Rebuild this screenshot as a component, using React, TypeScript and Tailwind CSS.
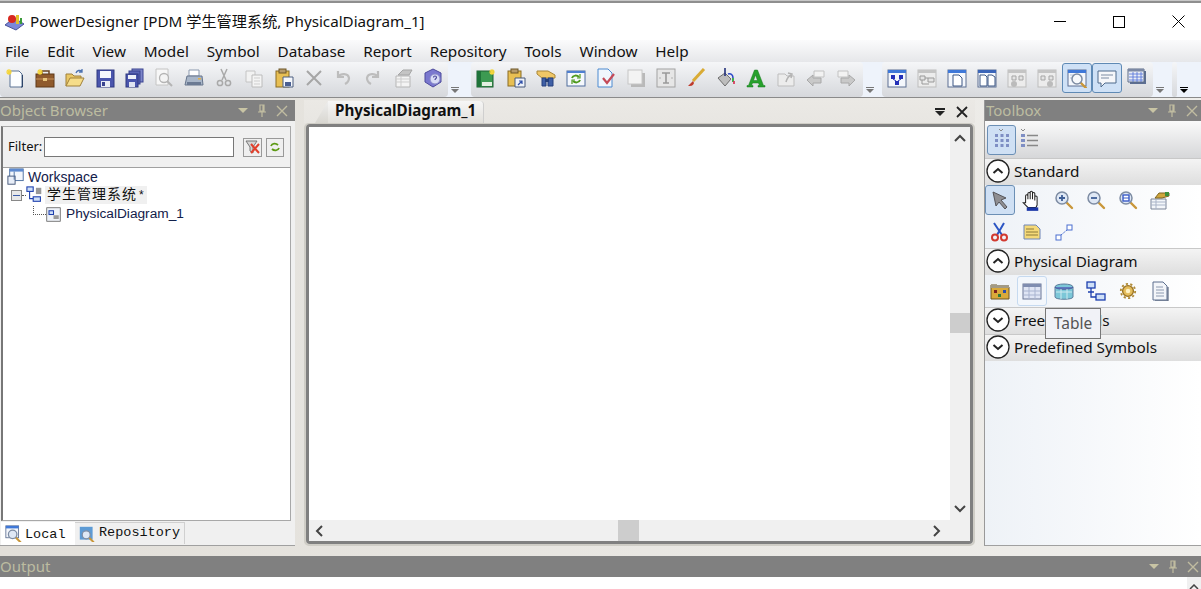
import React from 'react';

const sans = 'font-["Noto_Sans","Noto_Sans_CJK_SC",sans-serif]';

const Svg = ({ children, size = 20 }: { children: React.ReactNode; size?: number }) => (
  <svg width={size} height={size} viewBox="0 0 20 20" fill="none">{children}</svg>
);

const Star = ({ x = 3, y = 3 }: { x?: number; y?: number }) => (
  <path d={`M${x} ${y - 3}v6M${x - 3} ${y}h6M${x - 2} ${y - 2}l4 4M${x + 2} ${y - 2}l-4 4`} stroke="#f5d53a" strokeWidth="1.2" />
);

const Mag = ({ x = 9, y = 9, r = 5, fill = '#eef3fa' }: { x?: number; y?: number; r?: number; fill?: string }) => (
  <g>
    <path d={`M${x + r - 1} ${y + r - 1}l5 5`} stroke="#c9973a" strokeWidth="2.4" strokeLinecap="round" />
    <circle cx={x} cy={y} r={r} fill={fill} stroke="#7d8ca3" strokeWidth="1.5" />
  </g>
);

const Win = ({ x = 1, y = 2, w = 18, h = 16, bar = '#3f78d8' }: { x?: number; y?: number; w?: number; h?: number; bar?: string }) => (
  <g>
    <rect x={x} y={y} width={w} height={h} fill="#f4f7fc" stroke="#5c6f92" />
    <rect x={x} y={y} width={w} height="3" fill={bar} />
  </g>
);

// main toolbar, first group
const toolbarA: React.ReactNode[] = [
  <Svg key="new"><path d="M5 3h9l3 3v13H5z" fill="#fbfdff" stroke="#5a7394" /><path d="M16 19h1.5V7" stroke="#2d4468" /><Star x={4} y={4} /></Svg>,
  <Svg key="case"><rect x="1" y="6" width="18" height="13" fill="#8f5a2c" stroke="#5e3818" /><path d="M1 11h18" stroke="#c9935a" /><path d="M7 6V3h7v3" stroke="#6a4420" strokeWidth="1.5" /><rect x="8" y="10" width="4" height="3" fill="#e7c47c" /><Star x={5} y={4} /></Svg>,
  <Svg key="open"><path d="M1 18V6h6l2 2h7v3" fill="#e9c766" stroke="#a0803a" /><path d="M1 18l4-8h14l-4 8z" fill="#f6dd8a" stroke="#a0803a" /><path d="M11 5c1-3 4-3 6-2M17 1v3h-3" stroke="#4c72b0" strokeWidth="1.3" /></Svg>,
  <Svg key="save"><rect x="2" y="2" width="17" height="17" fill="#4a55ad" stroke="#2f3880" /><rect x="5" y="3" width="11" height="7" fill="#f4f6fc" /><rect x="6" y="13" width="9" height="6" fill="#e9ecf5" /><rect x="7" y="14" width="3" height="4" fill="#39438f" /></Svg>,
  <Svg key="saveall"><rect x="8" y="1" width="11" height="13" fill="#7d86c9" stroke="#3a4390" /><rect x="5" y="3" width="11" height="13" fill="#5b65b7" stroke="#3a4390" /><rect x="2" y="6" width="12" height="13" fill="#4a55ad" stroke="#2f3880" /><rect x="4" y="7" width="8" height="4" fill="#eef0f9" /><rect x="5" y="14" width="6" height="5" fill="#dfe3f2" /></Svg>,
  <Svg key="preview"><path d="M2 1h12v16H2z" fill="#f7f7f7" stroke="#c4c4c4" /><circle cx="10" cy="10" r="4.500" fill="#f4f4f4" stroke="#b4b4b4" strokeWidth="1.300" /><path d="M13 13l5 5" stroke="#b4b4b4" strokeWidth="2" /></Svg>,
  <Svg key="print"><path d="M5 2h10v6H5z" fill="#fff" stroke="#8b99ae" /><path d="M3 8h15l1 9H1z" fill="#a9b6c8" stroke="#66758c" /><rect x="3" y="14" width="14" height="3" fill="#6b7a93" /><rect x="14" y="10" width="3" height="1.5" fill="#e2b04a" /></Svg>,
  <Svg key="cut"><path d="M7 1l5 11M13 1L8 12" stroke="#a9a9a9" strokeWidth="1.5" /><circle cx="6" cy="15" r="2.6" stroke="#a9a9a9" strokeWidth="1.5" /><circle cx="14" cy="15" r="2.6" stroke="#a9a9a9" strokeWidth="1.5" /></Svg>,
  <Svg key="copy"><path d="M2 3h9v11H2z" fill="#f2f2f2" stroke="#c4c4c4" /><path d="M8 7h10v12H8z" fill="#f4f4f4" stroke="#bcbcbc" /><path d="M10 10h6M10 13h6M10 16h6" stroke="#cfcfcf" /></Svg>,
  <Svg key="paste"><rect x="2" y="3" width="13" height="16" fill="#e8bf53" stroke="#8a6c25" /><rect x="5" y="1" width="7" height="4" fill="#b59a6a" stroke="#6e5726" /><path d="M9 9h10v10H9z" fill="#f5f7fb" stroke="#4c5f80" /><rect x="11" y="14" width="6" height="4" fill="#4a5f92" /></Svg>,
  <Svg key="del"><path d="M3 3l14 14M17 3L3 17" stroke="#a6a6a6" strokeWidth="2" /></Svg>,
  <Svg key="undo"><path d="M5 3v6h6M5 9c3-4 10-4 11 1 0 3-2 5-4 6" stroke="#bdbdbd" strokeWidth="2.2" /></Svg>,
  <Svg key="redo"><path d="M15 3v6H9M15 9c-3-4-10-4-11 1 0 3 2 5 4 6" stroke="#bdbdbd" strokeWidth="2.2" /></Svg>,
  <Svg key="prop"><path d="M3 8h14v11H3z" fill="#f4f4f4" stroke="#b5b5b5" /><path d="M3 11h14M3 14h14M8 8v11" stroke="#cdcdcd" /><path d="M5 7l5-5 9 0-3 5z" fill="#c4c4c4" stroke="#a5a5a5" /></Svg>,
  <Svg key="help"><path d="M10 1l8 4v9l-8 5-8-5V5z" fill="#7a78cf" stroke="#4d4a9c" /><circle cx="12" cy="11" r="5" fill="#d8dcf5" stroke="#8a8cc8" /><path d="M10.5 9.5c0-2 3-2 3 0 0 1-1.500 1-1.500 2.500" stroke="#4d4a9c" strokeWidth="1.2" /></Svg>,
];

const toolbarB: React.ReactNode[] = [
  <Svg key="book"><rect x="1" y="3" width="16" height="16" fill="#3c9a52" stroke="#1d5e30" /><rect x="1" y="3" width="4" height="16" fill="#1f7339" /><rect x="6" y="14" width="10" height="4" fill="#e2f0e0" /><Star x={16} y={4} /></Svg>,
  <Svg key="shortcut"><rect x="2" y="3" width="13" height="15" fill="#e8bf53" stroke="#8a6c25" /><rect x="5" y="1" width="7" height="4" fill="#b59a6a" stroke="#6e5726" /><path d="M9 10h10v9H9z" fill="#eef2f9" stroke="#46587a" /><path d="M12 17l4-4M13 13h3v3" stroke="#2f4fa8" strokeWidth="1.2" /></Svg>,
  <Svg key="binocular"><path d="M1 3h11l7 4v3H6L1 6z" fill="#f0c766" stroke="#a9873a" /><path d="M6 10v8h4v-8zM12 10v8h5v-8z" fill="#3f5fa6" stroke="#26407c" /><rect x="9" y="11" width="4" height="3" fill="#26407c" /></Svg>,
  <Svg key="refresh"><rect x="1" y="3" width="18" height="15" fill="#f5f8fd" stroke="#4f6d9c" /><rect x="1" y="3" width="18" height="2" fill="#4f7fd0" /><path d="M6 10c1-3 5-3 7-1M14 12c-1 3-5 3-7 1" stroke="#4f9a1c" strokeWidth="2" /><path d="M14 6v4h-3M6 16v-4h3" stroke="#4f9a1c" strokeWidth="1.2" /></Svg>,
  <Svg key="check"><path d="M2 1h10l4 4v14H2z" fill="#f0f6fd" stroke="#4c8ad0" /><path d="M7 10l4 5 7-9" stroke="#c44a58" strokeWidth="2.2" /></Svg>,
  <Svg key="shadow"><rect x="5" y="5" width="14" height="14" fill="#b9b9b9" /><rect x="2" y="2" width="14" height="14" fill="#f3f3f3" stroke="#c6c6c6" /></Svg>,
  <Svg key="text"><rect x="1" y="1" width="18" height="18" fill="#e6e6e6" stroke="#a2a2a2" /><path d="M6 5h8M10 5v10M7 15h6" stroke="#9a9a9a" strokeWidth="1.6" /><path d="M3 10h2M15 10h2" stroke="#b0b0b0" /></Svg>,
  <Svg key="brush"><path d="M18 1L7 13" stroke="#d9ab35" strokeWidth="3" /><path d="M7 13l-5 5c3 0 5 0 6-3z" fill="#bf3b2c" /></Svg>,
  <Svg key="bucket"><path d="M2 10l7-5 6 6-6 7z" fill="#bdbdbd" stroke="#6e6e6e" /><path d="M9 0v8" stroke="#22307a" strokeWidth="1.6" /><path d="M12 6c3-1 5 1 5 4" stroke="#2d49c8" strokeWidth="1.6" /><path d="M17 10v4" stroke="#16a02a" strokeWidth="1.600" /><path d="M18 13v3" stroke="#d7294f" strokeWidth="1.6" /></Svg>,
  <Svg key="font"><path d="M1 19h6v-1.500H5.500L6.500 15h6l1 2.500H12V19h7v-1.500h-1.500L11.500 2h-3L2.500 17.500H1zM7.500 12.500l2-5.500 2 5.500z" fill="#27a12c" stroke="#167a1c" strokeWidth=".5" /></Svg>,
  <Svg key="up"><path d="M2 6h7l2 2h7v10H2z" fill="#ececec" stroke="#bdbdbd" /><path d="M10 14c1-4 3-6 5-7M12 5l4 1-1 4" stroke="#b3b3b3" strokeWidth="1.5" /></Svg>,
  <Svg key="left"><path d="M8 3h10v6H8z" fill="#f2f2f2" stroke="#c2c2c2" /><path d="M1 12l6-5v3h8v5H7v3z" fill="#c9c9c9" stroke="#a8a8a8" /></Svg>,
  <Svg key="right"><path d="M2 3h10v6H2z" fill="#f2f2f2" stroke="#c2c2c2" /><path d="M19 12l-6-5v3H5v5h8v3z" fill="#c9c9c9" stroke="#a8a8a8" /></Svg>,
];

const Gray = ({ children }: { children: React.ReactNode }) => (
  <Svg><rect x="1" y="2" width="18" height="17" fill="#ececec" stroke="#bdbdbd" /><rect x="1" y="2" width="18" height="3" fill="#c4c4c4" />{children}</Svg>
);

const toolbarC: { icon: React.ReactNode; on?: boolean }[] = [
  { icon: <Svg><Win y={2} h={17} /><path d="M4 7h4v4H4zM12 7h4v4h-4zM8 13h4v4H8z" fill="#2430b8" /><path d="M6 11l3 2M14 11l-3 2" stroke="#2430b8" /></Svg> },
  { icon: <Gray><path d="M3 8h5v4H3zM11 10h6v4h-6z" fill="#e4e4e4" stroke="#999" /><path d="M8 10h3M5 12v4h7" stroke="#999" /></Gray> },
  { icon: <Svg><Win y={2} h={17} /><path d="M6 7h6l3 3v8H6z" fill="#fff" stroke="#3c5684" /></Svg> },
  { icon: <Svg><Win y={2} h={17} bar="#3b65b8" /><path d="M3 7h5l2 2v9H3zM11 7h4l3 2v9h-7z" fill="#fff" stroke="#3c5684" /></Svg> },
  { icon: <Gray><path d="M5 8h4v4H5zM12 8h4v4h-4z" fill="#e4e4e4" stroke="#a5a5a5" /><circle cx="7" cy="16" r="3" fill="#bbb" /></Gray> },
  { icon: <Gray><path d="M4 8h4v4H4zM12 8h4v4h-4z" fill="#e4e4e4" stroke="#a5a5a5" /><circle cx="13" cy="16" r="3" fill="#bbb" /></Gray> },
  { icon: <Svg><Win y={2} h={16} /><path d="M3 7h5M3 10h3" stroke="#b5c3da" /><Mag x={10} y={11} r={5} fill="#f7f9fc" /></Svg>, on: true },
  { icon: <Svg><path d="M1 3h18v12H8l-4 4v-4H1z" fill="#f6f7fa" stroke="#4f6a8c" /><path d="M4 7h12M4 10h8" stroke="#7d8ca3" /></Svg>, on: true },
  { icon: <Svg><path d="M3 3h16v13H3z" fill="#5d6f92" /><path d="M1 1h16v13H1z" fill="#e9edf5" stroke="#5c6c88" /><rect x="1" y="1" width="16" height="2.500" fill="#7c89a5" /><path d="M2 6h14M2 9h14M2 12h14M6 4v10M10 4v10M14 4v10" stroke="#4f6fd8" strokeWidth=".8" /></Svg> },
];

const Grip = ({ dark = false }: { dark?: boolean }) => (
  <div className="flex flex-col items-center justify-end pb-[4px] w-[14px] h-[35px] shrink-0">
    <div className={`w-[8px] h-[1px] mb-[1px] ${dark ? 'bg-black' : 'bg-[#777]'}`}></div>
    <div className={`w-0 h-0 border-x-[4px] border-x-transparent border-t-[4px] ${dark ? 'border-t-black' : 'border-t-[#777]'}`}></div>
  </div>
);

const ToolGroup = ({ children, className = '' }: { children: React.ReactNode; className?: string }) => (
  <div className={`flex items-start pt-[1px] h-[35px] rounded-[4px] bg-gradient-to-b from-[#f5f6f8] to-[#d6d8dc] ${className}`}>
    {children}
  </div>
);

const PanelHead = ({ title, className = '', iconsClass = 'pr-[7px]' }: { title: string; className?: string; iconsClass?: string }) => (
  <div className={`h-[21px] shrink-0 bg-[#808080] flex items-center justify-between ${className}`}>
    <span className="text-[15px] leading-none text-[#bcbca0]">{title}</span>
    <div className={`flex items-center gap-[9px] ${iconsClass}`}>
      <div className="w-0 h-0 border-x-[5px] border-x-transparent border-t-[5px] border-t-[#c8c4a4]"></div>
      <svg width="10" height="13" viewBox="0 0 10 13" fill="none"><path d="M3 1h4v6H3zM1 8h8M5 8v5M6 1v6" stroke="#c0bca0" strokeWidth="1.200" /></svg>
      <svg width="12" height="12" viewBox="0 0 12 12"><path d="M1 1l10 10M11 1L1 11" stroke="#c0bca0" strokeWidth="1.400" /></svg>
    </div>
  </div>
);

const Round = ({ open }: { open: boolean }) => (
  <svg width="24" height="24" viewBox="0 0 24 24" fill="none" className="shrink-0">
    <circle cx="12" cy="12" r="11" fill="#fff" stroke="#222" strokeWidth="1.300" />
    <path d={open ? 'M7.500 14l4.500-4 4.500 4' : 'M7.500 10l4.500 4 4.500-4'} stroke="#222" strokeWidth="2" />
  </svg>
);

const SectionHead = ({ title, open }: { title: string; open: boolean }) => (
  <div className="h-[27px] shrink-0 flex items-center gap-[4px] pl-[1px] pb-[2px] bg-gradient-to-b from-[#f4f4f4] to-[#dedede] border-t border-t-[#c8c8c8]">
    <Round open={open} />
    <span className="text-[15.300px] text-[#111]">{title}</span>
  </div>
);

const ToolBtn = ({ children, state }: { children: React.ReactNode; state?: 'on' | 'hover' }) => (
  <div className={`w-[30px] h-[30px] flex items-center justify-center rounded-[3px] border ${state === 'on' ? 'bg-[#cfe0f4] border-[#6b8fb5]' : state === 'hover' ? 'bg-[#f3f7fc] border-[#c6daf0]' : 'border-transparent'}`}>
    {children}
  </div>
);

const standardTools: { icon: React.ReactNode; state?: 'on' | 'hover' }[] = [
  { icon: <Svg><path d="M3 2l13 6-5 2 6 7-2 2-6-7-3 4z" fill="#8f8f93" stroke="#55555a" /></Svg>, state: 'on' },
  { icon: <Svg size={23}><path d="M4 12V6a1 1 0 0 1 2 0v3V4a1 1 0 0 1 2 0v5V3a1 1 0 0 1 2 0v6V4a1 1 0 0 1 2 0v6V7a1 1 0 0 1 2 0v7l-1 2H6l-4-4z" fill="#fff" stroke="#222" strokeWidth=".9" /><rect x="5" y="16" width="10" height="3" fill="#1c37a8" /></Svg> },
  { icon: <Svg><Mag x={8} y={8} r={6} fill="#dfe8f5" /><path d="M5 8h6M8 5v6" stroke="#3e5e96" strokeWidth="1.800" /></Svg> },
  { icon: <Svg><Mag x={8} y={8} r={6} fill="#dfe8f5" /><path d="M5 8h6" stroke="#3e5e96" strokeWidth="1.800" /></Svg> },
  { icon: <Svg><Mag x={8} y={8} r={6} fill="#dfe8f5" /><rect x="5" y="5" width="6" height="6" fill="#fff" stroke="#3a5cc8" strokeWidth="1.400" /><path d="M5 8h6" stroke="#3a5cc8" /></Svg> },
  { icon: <Svg><path d="M1 9h15v10H1z" fill="#f3f6fa" stroke="#7a8599" /><path d="M1 12h15M1 15h15M6 9v10" stroke="#a9b4c8" /><path d="M5 8l4-5h10v3l-7 2z" fill="#d0a63c" stroke="#7d6422" /><path d="M15 2h4v4h-4z" fill="#3d8f3a" /></Svg> },
  { icon: <Svg><path d="M4 1l8 12M14 1L7 13" stroke="#2b55c4" strokeWidth="2" /><circle cx="5" cy="15.500" r="3" stroke="#d23a30" strokeWidth="2" /><circle cx="14" cy="15.500" r="3" stroke="#d23a30" strokeWidth="2" /></Svg> },
  { icon: <Svg><path d="M2 3h12l4 4v10H2z" fill="#f5d978" stroke="#6f86b8" /><path d="M4 7h8M4 10h12M4 13h12" stroke="#8c7a3a" /></Svg> },
  { icon: <Svg><rect x="2" y="13" width="5" height="5" fill="#fff" stroke="#4a6ed0" /><rect x="13" y="3" width="5" height="5" fill="#fff" stroke="#4a6ed0" /><path d="M7 13l6-5" stroke="#4a6ed0" strokeDasharray="2 1" /></Svg> },
];

const physicalTools: { icon: React.ReactNode; state?: 'on' | 'hover' }[] = [
  { icon: <Svg><path d="M1 18V4h6l2 2h10v12z" fill="#d9a93a" stroke="#6d5722" /><rect x="1" y="4" width="18" height="3" fill="#a29a85" /><rect x="4" y="9" width="3" height="3" fill="#7a1f20" /><rect x="13" y="9" width="3" height="3" fill="#2b4ea8" /><rect x="8" y="13" width="3" height="3" fill="#2b7a3c" /></Svg> },
  { icon: <Svg><rect x="1" y="3" width="18" height="15" fill="#dfe5f4" stroke="#6b7796" /><rect x="1" y="3" width="18" height="3" fill="#7f8db0" /><path d="M2 10h16M2 14h16M7 6v12M13 6v12" stroke="#a9b4d0" /></Svg>, state: 'hover' },
  { icon: <Svg><path d="M1 6c0-4 18-4 18 0v10c0 3-18 3-18 0z" fill="#7cc7d8" stroke="#5c7d9c" /><path d="M1 6c0 3 18 3 18 0" fill="#5e78c0" stroke="#4a5f9c" /><path d="M2 11h16M7 8v10M13 8v10" stroke="#cde9f0" /></Svg> },
  { icon: <Svg><rect x="1" y="1" width="8" height="6" fill="#cfe0f8" stroke="#1d3fae" strokeWidth="1.300" /><rect x="10" y="13" width="9" height="6" fill="#cfe0f8" stroke="#1d3fae" strokeWidth="1.300" /><path d="M5 7v9h5M2 11h6" stroke="#1d3fae" strokeWidth="1.300" /></Svg> },
  { icon: <Svg size={18}><circle cx="10" cy="10" r="6" fill="#e5bd5c" stroke="#9a7424" strokeWidth="1.500" /><circle cx="10" cy="10" r="8" stroke="#b08b38" strokeWidth="2" strokeDasharray="2.500 2.500" /><circle cx="10" cy="10" r="2.500" fill="#fff2c4" /></Svg> },
  { icon: <Svg><path d="M3 1h10l4 4v14H3z" fill="#f3f5f9" stroke="#5d6f8e" /><path d="M6 6h7M6 9h8M6 12h8M6 15h8" stroke="#8d9ab0" /><path d="M18 6v14H5" stroke="#3a4a68" /></Svg> },
];

export default function App() {
  return (
    <div className={`w-[1201px] h-[589px] overflow-hidden flex flex-col bg-white ${sans}`}>
      {/* window chrome */}
      <div className="h-[3px] shrink-0 border-b-2 border-b-[#8f8f8f] bg-[#c8c8c8]"></div>
      <div className="h-[37px] shrink-0 flex items-center bg-white">
        <div className="ml-[4px] mr-[5px]">
          <svg width="21" height="20" viewBox="0 0 21 20" fill="none">
            <path d="M1 13l9-7 10 6-8 6z" fill="#7c88d8" stroke="#4a5499" />
            <rect x="12" y="3" width="3" height="9" fill="#e0c22c" />
            <rect x="16" y="6" width="2" height="6" fill="#3a9a3a" />
            <circle cx="8" cy="7" r="4" fill="#d8281f" />
          </svg>
        </div>
        <span className="text-[15.200px] text-[#111] whitespace-nowrap">PowerDesigner [PDM 学生管理系统, PhysicalDiagram_1]</span>
        <div className="ml-auto flex items-center gap-[47px] pr-[16px]">
          <div className="w-[12px] h-[1px] bg-black"></div>
          <div className="w-[12px] h-[12px] border border-black"></div>
          <svg width="13" height="13" viewBox="0 0 13 13"><path d="M.5.500l12 12M12.500.500l-12 12" stroke="#000" strokeWidth="1" /></svg>
        </div>
      </div>
      <div className="h-[22px] shrink-0 flex items-center gap-[17.800px] pl-[5px] text-[15.300px] text-[#111] bg-gradient-to-b from-[#fbfbfc] to-[#e6e7ea]">
        {['File', 'Edit', 'View', 'Model', 'Symbol', 'Database', 'Report', 'Repository', 'Tools', 'Window', 'Help'].map((m) => (
          <span key={m}>{m}</span>
        ))}
      </div>
      <div className="h-[36px] shrink-0 flex items-start bg-[#eef3fb] border-b border-b-[#8a8a8a]">
        <ToolGroup className="w-[448px]">
          {toolbarA.map((icon, i) => (
            <div key={i} className="w-[30px] h-[30px] flex items-center justify-center">{icon}</div>
          ))}
        </ToolGroup>
        <Grip />
        <ToolGroup className="ml-[9px] w-[392px]">
          {toolbarB.map((icon, i) => (
            <div key={i} className="w-[30px] h-[30px] flex items-center justify-center">{icon}</div>
          ))}
        </ToolGroup>
        <Grip />
        <ToolGroup className="ml-[5px] w-[271px]">
          {toolbarC.map((b, i) => (
            <div key={i} className={`w-[30px] h-[30px] flex items-center justify-center rounded-[3px] border ${b.on ? 'bg-[#cfe1f6] border-[#5f8ab5]' : 'border-transparent'}`}>{b.icon}</div>
          ))}
        </ToolGroup>
        <Grip />
        <ToolGroup className="ml-[5px] w-[5px]">{null}</ToolGroup>
        <Grip dark />
      </div>

      <div className="flex-1 min-h-0 flex pt-[2px] bg-gradient-to-r from-[#e2dfd9] to-[#efeeeb]">
        {/* object browser */}
        <div className="w-[295px] shrink-0 flex flex-col h-[446px] bg-[#f0f0f0] border-b border-b-[#a0a0a0]">
          <PanelHead title="Object Browser" />
          <div className="mx-[1px] mt-[5px] h-[395px] shrink-0 flex flex-col border border-[#a8a8a8] border-l-2 border-l-[#777] w-[290px]">
            <div className="h-[41px] shrink-0 flex items-center pl-[5px] border-b border-b-[#a0a0a0] bg-[#f0f0f0]">
              <span className="text-[13px] text-[#111] mr-[2px]">Filter:</span>
              <div className="w-[190px] h-[20px] bg-white border border-[#777]"></div>
              <div className="ml-[9px] w-[19px] h-[19px] bg-[#efefef] border border-[#999] flex items-center justify-center">
                <svg width="16" height="16" viewBox="0 0 16 16" fill="none"><path d="M1 2h11L8 8v6L5 12V8z" fill="#d5d5d5" stroke="#777" /><path d="M6 5l8 9M14 5l-8 9" stroke="#e2402c" strokeWidth="2" /></svg>
              </div>
              <div className="ml-[4px] w-[18px] h-[19px] bg-[#efefef] border border-[#999] flex items-center justify-center">
                <svg width="12" height="12" viewBox="0 0 12 12" fill="none"><path d="M2 5c1-3 5-3 7-1M10 7c-1 3-5 3-7 1" stroke="#5d9a14" strokeWidth="1.800" /></svg>
              </div>
            </div>
            <div className="flex-1 bg-white pl-[4px] leading-[18px] text-[#111] font-['Liberation_Sans','Noto_Sans_CJK_SC',sans-serif]">
              <div className="flex items-center h-[18px] gap-[3px]">
                <Svg size={18}><rect x="3" y="1" width="15" height="13" fill="#f2f6fc" stroke="#466a9c" /><rect x="3" y="1" width="15" height="3" fill="#5d8ad0" /><rect x="1" y="9" width="8" height="9" fill="#e8eef8" stroke="#3c4f72" /><path d="M8 4v9" stroke="#466a9c" /></Svg>
                <span className="text-[14px] text-[#12204a]">Workspace</span>
              </div>
              <div className="flex items-center h-[18px]">
                <div className="w-[11px] h-[11px] ml-[4px] bg-[#e8e8e8] border border-[#888] flex items-center justify-center"><div className="w-[7px] h-[1px] bg-[#3b5ca8]"></div></div>
                <div className="w-[4px] border-t border-dotted border-t-[#555]"></div>
                <Svg size={18}><rect x="1" y="1" width="7" height="5" fill="#cfe0f8" stroke="#1d3fae" strokeWidth="1.200" /><rect x="8" y="12" width="8" height="5" fill="#cfe0f8" stroke="#1d3fae" strokeWidth="1.200" /><path d="M4 6v8h4" stroke="#1d3fae" strokeWidth="1.200" /><path d="M11 2h6v7h-6z" fill="#999" /></Svg>
                <span className="ml-[1px] pl-[2px] text-[14px] tracking-[1px] bg-[#f0f0f0] h-[18px] leading-[16px] pr-[3px]">学生管理系统<span className="ml-[2px] text-[12px] tracking-normal">*</span></span>
              </div>
              <div className="flex items-center h-[18px] ml-[26px] mt-[1px]">
                <div className="w-[13px] h-[9px] -mt-[8px] border-l border-b border-dotted border-[#555] shrink-0"></div>
                <Svg size={15}><rect x="1" y="1" width="18" height="18" fill="#eef2f8" stroke="#555" /><rect x="4" y="5" width="6" height="5" fill="#cfe0f8" stroke="#1d3fae" strokeWidth="1.400" /><rect x="10" y="11" width="7" height="5" fill="#999" /></Svg>
                <span className="ml-[5px] text-[13.700px] text-[#12204a]">PhysicalDiagram_1</span>
              </div>
            </div>
          </div>
          <div className="flex-1 flex items-start mt-[1px] pl-[1px] font-['Liberation_Mono','Noto_Sans_CJK_SC',monospace] text-[13.500px] text-[#111]">
            <div className="w-[74px] h-[23px] bg-white flex items-center gap-[3px] pl-[4px]">
              <Svg size={17}><Win x={1} y={1} w={15} h={14} /><Mag x={9} y={11} r={5} fill="#dfe8f5" /></Svg>
              <span className="mt-[3px]">Local</span>
            </div>
            <div className="w-[110px] h-[22px] flex items-center gap-[4px] pl-[4px] border-t border-r border-[#d0d0d0]">
              <Svg size={16}><rect x="1" y="1" width="16" height="16" fill="#5d9bd5" /><Mag x={9} y={11} r={5} fill="#dfe8f5" /></Svg>
              <span className="-mt-[1px]">Repository</span>
            </div>
          </div>
        </div>

        {/* diagram area */}
        <div className="w-[671px] ml-[9px] shrink-0 flex flex-col h-[446px]">
          <div className="h-[23px] shrink-0 flex items-end bg-gradient-to-b from-[#ebe9e5] to-[#e8e6e2]">
            <div className="ml-[11px] w-[13px] h-[22px] bg-gradient-to-b from-[#eeeeee] to-[#d9d7d1] [clip-path:polygon(100%_0,100%_100%,0_100%)]"></div>
            <div className="w-[156px] h-[22px] pl-[7px] pb-[3px] rounded-tr-[4px] flex items-center bg-gradient-to-b from-[#f6f6f6] to-[#e2e0db] text-[15.200px] font-bold text-[#111] whitespace-nowrap border-r border-r-[#cfcfcf]">PhysicalDiagram_1</div>
            <div className="ml-auto self-center flex items-center gap-[11px] pr-[7px]">
              <div className="flex flex-col items-center">
                <div className="w-[10px] h-[2px] bg-[#222] mb-[1px]"></div>
                <div className="w-0 h-0 border-x-[5px] border-x-transparent border-t-[5px] border-t-[#222]"></div>
              </div>
              <svg width="12" height="12" viewBox="0 0 12 12"><path d="M1 1l10 10M11 1L1 11" stroke="#222" strokeWidth="1.800" /></svg>
            </div>
          </div>
          <div className="flex-1 min-h-0 flex flex-col border-[1px] border-b-2 border-x-2 border-[#cfcdc6] rounded-[5px]">
            <div className="flex-1 min-h-0 flex flex-col border-[3px] border-[#808080] rounded-[4px] bg-white">
              <div className="flex-1 min-h-0 flex">
                <div className="flex-1 bg-white"></div>
                <div className="w-[20px] bg-[#f0f0f0] flex flex-col items-center justify-between py-[7px] relative">
                  <svg width="12" height="8" viewBox="0 0 12 8" fill="none"><path d="M1 7l5-5 5 5" stroke="#444" strokeWidth="2" /></svg>
                  <div className="w-[20px] h-[20px] bg-[#cdcdcd] absolute top-[186px]"></div>
                  <svg width="12" height="8" viewBox="0 0 12 8" fill="none"><path d="M1 1l5 5 5-5" stroke="#444" strokeWidth="2" /></svg>
                </div>
              </div>
              <div className="h-[21px] shrink-0 bg-[#f0f0f0] flex items-center justify-between pl-[6px] pr-[29px] relative">
                <svg width="8" height="12" viewBox="0 0 8 12" fill="none"><path d="M7 1L2 6l5 5" stroke="#444" strokeWidth="2" /></svg>
                <div className="w-[21px] h-[21px] bg-[#cdcdcd] absolute left-[309px] top-0"></div>
                <svg width="8" height="12" viewBox="0 0 8 12" fill="none"><path d="M1 1l5 5-5 5" stroke="#444" strokeWidth="2" /></svg>
              </div>
            </div>
          </div>
        </div>

        {/* toolbox */}
        <div className="w-[217px] ml-[9px] shrink-0 h-[446px] flex flex-col relative bg-gradient-to-r from-[#eef2f7] to-white border-l border-l-[#999] border-b border-b-[#a0a0a0]">
          <PanelHead title="Toolbox" className="pl-[1px]" iconsClass="pr-[3px]" />
          <div className="h-[37px] shrink-0 flex items-center pl-[2px] gap-[2px] bg-gradient-to-b from-[#fafafa] to-[#d6d7d9]">
            <div className="w-[29px] h-[30px] bg-[#cfe0f4] border border-[#6b8fb5] rounded-[3px] flex items-center justify-center">
              <svg width="20" height="24" viewBox="0 0 20 24" fill="none"><path d="M7 1l2 2 2-2" stroke="#888" /><path d="M3 6h3v3H3zM8.500 6h3v3h-3zM14 6h3v3h-3zM3 11h3v3H3zM8.500 11h3v3h-3zM14 11h3v3h-3zM3 16h3v3H3zM8.500 16h3v3h-3zM14 16h3v3h-3z" fill="#7f8fc4" /></svg>
            </div>
            <svg width="20" height="24" viewBox="0 0 20 24" fill="none" className="ml-[2px]"><path d="M1 1l2 2 2-2" stroke="#888" /><path d="M1 6h4v3H1zM1 11h4v3H1zM1 16h4v3H1z" fill="#7f8fc4" /><path d="M7 7.500h11M7 12.500h11M7 17.500h11" stroke="#888" strokeWidth="1.500" /></svg>
          </div>
          <SectionHead title="Standard" open />
          <div className="h-[63px] shrink-0 flex flex-wrap content-start gap-[2px]">
            {standardTools.map((t, i) => (
              <ToolBtn key={i} state={t.state}>{t.icon}</ToolBtn>
            ))}
          </div>
          <SectionHead title="Physical Diagram" open />
          <div className="h-[32px] shrink-0 flex items-center gap-[2px]">
            {physicalTools.map((t, i) => (
              <ToolBtn key={i} state={t.state}>{t.icon}</ToolBtn>
            ))}
          </div>
          <SectionHead title="Free Symbols" open={false} />
          <SectionHead title="Predefined Symbols" open={false} />
          <div className="absolute left-[60px] top-[208px] w-[56px] h-[31px] bg-[#f1f2f7] border border-[#777] flex items-center justify-center text-[15.500px] text-[#555]">Table</div>
        </div>
      </div>

      {/* output */}
      <PanelHead title="Output" iconsClass="pr-[2px]" />
      <div className="h-[12px] shrink-0 bg-white flex justify-end overflow-hidden">
        <div className="w-[14px] h-[12px] bg-[#f0f0f0] flex justify-center pt-[7px]">
          <svg width="10" height="5" viewBox="0 0 10 5" fill="none"><path d="M1 5l4-4 4 4" stroke="#444" strokeWidth="1.500" /></svg>
        </div>
      </div>
    </div>
  );
}
